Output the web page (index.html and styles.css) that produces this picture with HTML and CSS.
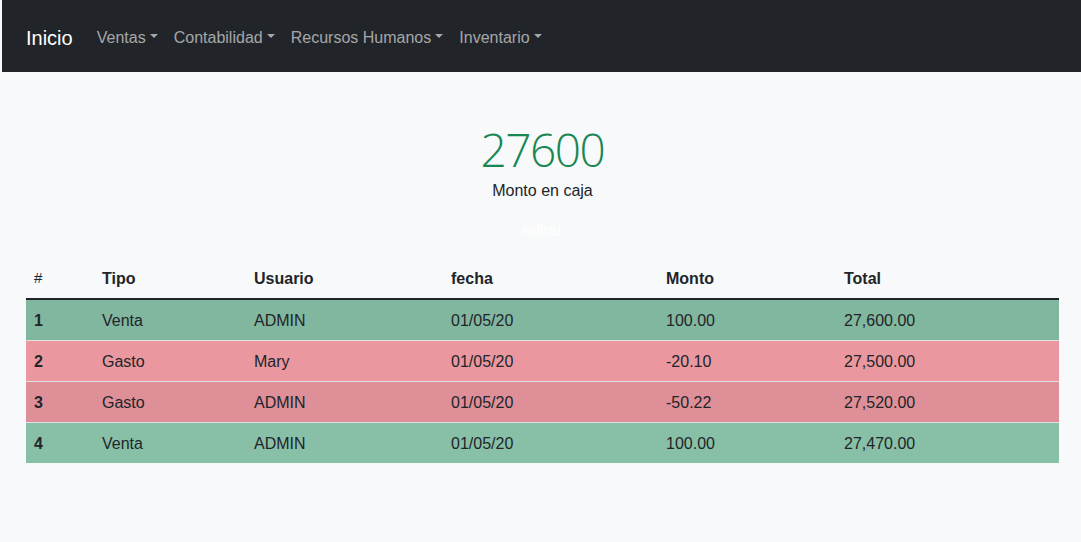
FILE: index.html
```html
<!DOCTYPE html>
<html lang="es">
<head>
<meta charset="utf-8">
<title>Caja</title>
<link rel="stylesheet" href="styles.css">
</head>
<body>
<nav class="navbar">
  <a class="brand" href="#">Inicio</a>
  <ul class="nav">
    <li><a class="nav-link dropdown" href="#">Ventas</a></li>
    <li><a class="nav-link dropdown" href="#">Contabilidad</a></li>
    <li><a class="nav-link dropdown" href="#">Recursos Humanos</a></li>
    <li><a class="nav-link dropdown" href="#">Inventario</a></li>
  </ul>
</nav>
<main class="main">
  <section class="summary">
    <h1 class="amount">27600</h1>
    <p class="caption">Monto en caja</p>
    <button class="edit" type="button">editar</button>
  </section>
  <table class="table">
    <colgroup>
      <col class="c-num"><col class="c-tipo"><col class="c-user"><col class="c-fecha"><col class="c-monto"><col class="c-total">
    </colgroup>
    <thead>
      <tr><th class="hash">#</th><th>Tipo</th><th>Usuario</th><th>fecha</th><th>Monto</th><th>Total</th></tr>
    </thead>
    <tbody>
      <tr class="row-success odd"><th>1</th><td>Venta</td><td>ADMIN</td><td>01/05/20</td><td>100.00</td><td>27,600.00</td></tr>
      <tr class="row-danger"><th>2</th><td>Gasto</td><td>Mary</td><td>01/05/20</td><td>-20.10</td><td>27,500.00</td></tr>
      <tr class="row-danger odd"><th>3</th><td>Gasto</td><td>ADMIN</td><td>01/05/20</td><td>-50.22</td><td>27,520.00</td></tr>
      <tr class="row-success"><th>4</th><td>Venta</td><td>ADMIN</td><td>01/05/20</td><td>100.00</td><td>27,470.00</td></tr>
    </tbody>
  </table>
</main>
</body>
</html>
```

FILE: styles.css
```css
* { box-sizing: border-box; }
html, body { margin: 0; padding: 0; }
body {
  background: #f8f9fa;
  color: #212529;
  font-family: "Liberation Sans", Arial, sans-serif;
  font-size: 16px;
  line-height: 1.5;
}
.navbar {
  margin-left: 2px;
  height: 72px;
  background: #212529;
  display: flex;
  align-items: center;
  padding: 3px 0 0 24px;
}
.brand {
  color: #fff;
  font-size: 20px;
  text-decoration: none;
  margin-right: 16px;
  line-height: 30px;
}
.nav {
  list-style: none;
  margin: 0;
  padding: 0;
  display: flex;
}
.nav-link {
  display: block;
  padding: 8px;
  color: rgba(255,255,255,.6);
  text-decoration: none;
}
.dropdown::after {
  content: "";
  display: inline-block;
  margin-left: .255em;
  vertical-align: .255em;
  border-top: .3em solid;
  border-right: .3em solid transparent;
  border-left: .3em solid transparent;
}
.main { padding: 0 22px 0 26px; }
.summary {
  display: flex;
  flex-direction: column;
  align-items: center;
  padding-top: 50px;
}
.amount {
  margin: 0;
  font-family: "Open Sans", "Liberation Sans", sans-serif;
  font-size: 46px;
  font-weight: 300;
  line-height: 1.2;
  letter-spacing: -1.5px;
  color: #198754;
}
.caption { margin: 2px 0 0; }
.edit {
  margin-top: 10px;
  background: transparent;
  border: 0;
  padding: 6px 12px;
  color: #fff;
  font: inherit;
}
.table {
  margin-top: 9px;
  width: 100%;
  border-collapse: collapse;
  table-layout: fixed;
}
.c-num { width: 68px; }
.c-tipo { width: 152px; }
.c-user { width: 197px; }
.c-fecha { width: 215px; }
.c-monto { width: 178px; }
.c-total { width: 223px; }
.table th, .table td {
  padding: 8px;
  text-align: left;
  vertical-align: top;
}
.table thead th { padding: 9px 8px 7px; border-bottom: 2px solid #212529; }
.table tbody th, .table tbody td { padding: 9px 8px 7px; }
.table thead th.hash { font-weight: 400; font-size: 15px; }
.table tbody tr { border-top: 1px solid #dee2e6; }
.table tbody tr:first-child { border-top: 0; }
.row-success { background: #88c0a7; }
.row-danger { background: #ea979f; }
.row-success.odd { background: #81b69f; }
.row-danger.odd { background: #de8f97; }
.table tbody td { color: #212529; }
```
